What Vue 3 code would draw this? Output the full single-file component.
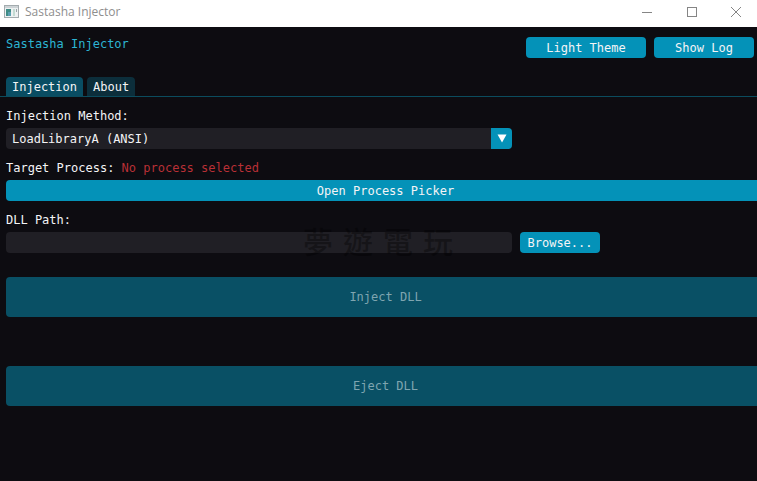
<template>
  <div class="window">
    <header class="title-bar">
      <svg class="app-icon" viewBox="0 0 15 13" aria-hidden="true">
        <rect x="0.5" y="0.5" width="14" height="12" fill="#eef1f2" stroke="#a3abae" />
        <rect x="1" y="1" width="13" height="2" fill="#cdd3d6" />
        <rect x="2" y="4" width="5" height="7" fill="#3f8c86" />
        <rect x="4" y="7" width="3" height="4" fill="#5b9fb0" />
        <rect x="9" y="4" width="2" height="7" fill="#c3dbd3" />
        <rect x="12" y="4" width="1" height="3" fill="#9aa5a8" />
      </svg>
      <span class="window-title">Sastasha Injector</span>
      <div class="window-controls">
        <button type="button" class="window-btn" aria-label="Minimize">
          <svg viewBox="0 0 12 12"><path d="M1 6.5h10" /></svg>
        </button>
        <button type="button" class="window-btn" aria-label="Maximize">
          <svg viewBox="0 0 12 12"><rect x="1.5" y="1.5" width="9" height="9" /></svg>
        </button>
        <button type="button" class="window-btn" aria-label="Close">
          <svg viewBox="0 0 12 12"><path d="M1 1l10 10M11 1L1 11" /></svg>
        </button>
      </div>
    </header>

    <main class="content">
      <div class="toolbar">
        <h1 class="app-name">Sastasha Injector</h1>
        <button type="button" class="btn theme-btn">Light Theme</button>
        <button type="button" class="btn log-btn">Show Log</button>
      </div>

      <nav class="tabs" role="tablist">
        <button
          v-for="tab in tabs"
          :key="tab"
          type="button"
          role="tab"
          class="tab"
          :class="{ active: tab === activeTab }"
          :aria-selected="tab === activeTab"
          @click="activeTab = tab"
        >
          {{ tab }}
        </button>
      </nav>

      <section v-if="activeTab === 'Injection'" class="panel">
        <label class="line" for="method">Injection Method:</label>
        <div class="combo">
          <select id="method" v-model="method">
            <option>LoadLibraryA (ANSI)</option>
          </select>
          <span class="combo-arrow">
            <svg viewBox="0 0 10 9"><path d="M0.5 0.5h9L5 8.5z" /></svg>
          </span>
        </div>

        <p class="line">Target Process: <span class="error">No process selected</span></p>
        <button type="button" class="btn wide">Open Process Picker</button>

        <label class="line" for="dll-path">DLL Path:</label>
        <div class="path-row">
          <input id="dll-path" v-model="dllPath" type="text" />
          <button type="button" class="btn browse-btn">Browse...</button>
          <div class="watermark">
            <span v-for="char in watermark" :key="char">{{ char }}</span>
          </div>
        </div>

        <button type="button" class="btn wide action" disabled>Inject DLL</button>
        <button type="button" class="btn wide action" disabled>Eject DLL</button>
      </section>
    </main>
  </div>
</template>

<script setup>
import { ref } from "vue";

const tabs = ["Injection", "About"];
const watermark = "夢遊電玩";
const activeTab = ref("Injection");
const method = ref("LoadLibraryA (ANSI)");
const dllPath = ref("");
</script>

<style>
body {
  background: #0d0c11;
}
</style>

<style scoped>
.window {
  min-height: 100vh;
  display: flex;
  flex-direction: column;
  overflow: hidden;
  background: #0d0c11;
  color: #f4f4f6;
  font: 12px/15px "DejaVu Sans Mono", monospace;
}

* {
  box-sizing: border-box;
}

button,
input,
select {
  margin: 0;
  padding: 0;
  border: 0;
  font: inherit;
  color: inherit;
}

.title-bar {
  display: flex;
  align-items: center;
  height: 27px;
  padding-left: 4px;
  padding-bottom: 4px;
  background: #fff;
  color: #8e8e8e;
}

.app-icon {
  width: 15px;
  height: 13px;
  margin-right: 6px;
}

.window-title {
  flex: 1;
  font-family: "Open Sans", sans-serif;
}

.window-controls {
  display: flex;
}

.window-btn {
  display: flex;
  align-items: center;
  justify-content: center;
  width: 45px;
  height: 23px;
  background: none;
}

.window-btn:last-child {
  width: 43px;
}

.window-btn svg {
  width: 12px;
  height: 12px;
  fill: none;
  stroke: #858585;
}

.content {
  flex: 1;
}

.toolbar {
  display: flex;
  gap: 8px;
  padding: 10px 3px 0 6px;
}

.app-name {
  flex: 1;
  margin: 0;
  font-size: 12px;
  font-weight: normal;
  color: #2cb5d3;
}

.btn {
  height: 21px;
  padding-top: 1px;
  border-radius: 4px;
  background: #0492b8;
}

.theme-btn {
  width: 120px;
}

.log-btn {
  width: 100px;
}

.tabs {
  display: flex;
  gap: 4px;
  margin-top: 19px;
  padding-left: 6px;
  border-bottom: 1px solid #0b4c5e;
}

.tab {
  height: 19px;
  padding: 1px 6px 0;
  border-radius: 4px 4px 0 0;
  background: #0c2e3b;
}

.tab.active {
  background: #094d63;
}

/* the panel runs past the right edge of the window */
.panel {
  display: flex;
  flex-direction: column;
  margin-right: -8px;
  padding: 12px 0 0 6px;
}

.line {
  margin: 0 0 4px;
}

.error {
  color: #b93036;
}

.wide {
  margin-bottom: 12px;
}

.combo {
  display: flex;
  width: calc(200% / 3);
  height: 21px;
  margin-bottom: 12px;
  border-radius: 4px;
  background: #201f25;
  overflow: hidden;
}

.combo select {
  flex: 1;
  padding: 1px 6px 0;
  appearance: none;
  background: none;
}

.combo-arrow {
  display: flex;
  align-items: center;
  justify-content: center;
  width: 21px;
  background: #0492b8;
}

.combo-arrow svg {
  width: 10px;
  height: 9px;
  fill: #fff;
}

.path-row {
  position: relative;
  display: flex;
  gap: 8px;
  margin-bottom: 24px;
}

.path-row input {
  width: calc(200% / 3);
  height: 21px;
  padding: 0 6px;
  border-radius: 4px;
  background: #201f25;
}

.browse-btn {
  width: 80px;
}

.watermark {
  position: absolute;
  top: -8px;
  left: 297px;
  display: flex;
  gap: 10px;
  font: 500 30px/32px "Noto Sans CJK TC", sans-serif;
  color: rgba(0, 0, 0, 0.35);
  pointer-events: none;
}

.action {
  height: 40px;
  margin-bottom: 49px;
  background: #095065;
  color: #7fa5b0;
}

.action:last-child {
  margin-bottom: 0;
}
</style>
